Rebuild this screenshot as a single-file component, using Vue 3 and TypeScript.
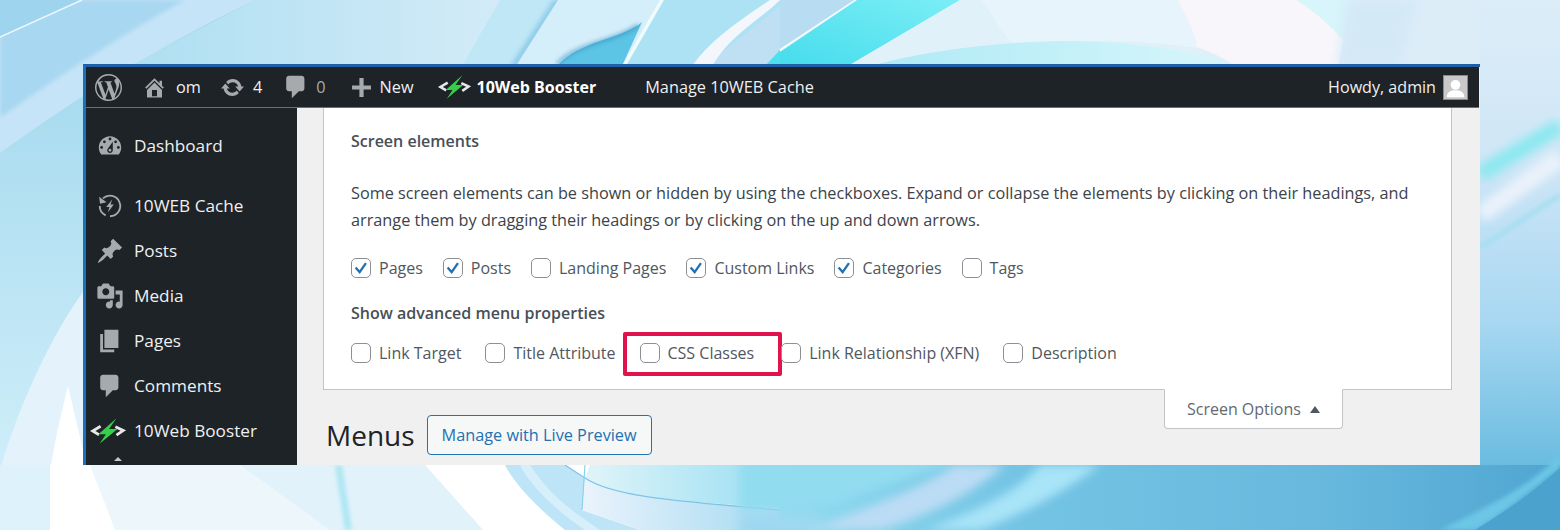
<template>
  <div class="page">
    <svg class="backdrop" viewBox="0 0 1560 530" preserveAspectRatio="none" aria-hidden="true">
      <defs>
        <linearGradient id="leftSide" x1="0" y1="0" x2="0" y2="1">
          <stop offset="0.2" stop-color="#a9dcef" />
          <stop offset="0.9" stop-color="#d0eefa" />
        </linearGradient>
        <linearGradient id="topBand" x1="0" y1="0" x2="1" y2="0">
          <stop offset="0" stop-color="#aedff1" />
          <stop offset="1" stop-color="#d4ebf8" />
        </linearGradient>
        <linearGradient id="rightSide" x1="0" y1="0" x2="0" y2="1">
          <stop offset="0" stop-color="#dcedf8" />
          <stop offset="0.3" stop-color="#cfe6f6" />
          <stop offset="0.6" stop-color="#a9d8f2" />
          <stop offset="0.87" stop-color="#6cbde0" />
          <stop offset="1" stop-color="#4fa6d1" />
        </linearGradient>
        <linearGradient id="lowerRight" x1="0" y1="0" x2="1" y2="0">
          <stop offset="0" stop-color="#92dcf0" />
          <stop offset="0.3" stop-color="#74c4e4" />
          <stop offset="0.7" stop-color="#68b8de" />
          <stop offset="1" stop-color="#4fa6d1" />
        </linearGradient>
        <linearGradient id="dome" x1="0" y1="0" x2="1" y2="0">
          <stop offset="0" stop-color="#aeeaf5" />
          <stop offset="1" stop-color="#d8f6fb" />
        </linearGradient>
        <linearGradient id="cyanBand" x1="0" y1="1" x2="1" y2="0">
          <stop offset="0" stop-color="#46dcec" />
          <stop offset="1" stop-color="#7beef6" />
        </linearGradient>
        <linearGradient id="swirlTop" x1="0" y1="0" x2="1" y2="0">
          <stop offset="0" stop-color="#e0f4f9" />
          <stop offset="1" stop-color="#92dcf0" />
        </linearGradient>
        <linearGradient id="swirlLow" x1="0" y1="0" x2="1" y2="0">
          <stop offset="0" stop-color="#eaf3fc" />
          <stop offset="1" stop-color="#9ed8f0" />
        </linearGradient>
        <filter id="soft" x="-20%" y="-20%" width="140%" height="140%"><feGaussianBlur stdDeviation="5" /></filter>
        <filter id="softer" x="-20%" y="-20%" width="140%" height="140%"><feGaussianBlur stdDeviation="2" /></filter>
      </defs>
      <rect width="1560" height="530" fill="#dff0f9" />

      <!-- left column -->
      <rect width="600" height="530" fill="url(#leftSide)" />
      <path d="M0 153C80 95 170 40 255 0H0Z" fill="#c6e4f7" />
      <path d="M0 118C60 75 130 30 185 0H0Z" fill="#a8d7f1" filter="url(#softer)" />
      <path d="M0 36 80 0H0Z" fill="#9fd4ee" />
      <path d="M0 37 82 0" stroke="#eaf7fc" stroke-width="1.500" />
      <path d="M0 470C20 400 55 330 83 292V470Z" fill="#e4f3fb" />
      <path d="M50 470C55 440 62 410 68 386L83 450V470Z" fill="#ffffff" />

      <!-- top strip -->
      <path d="M130 66 255 0H510V66Z" fill="url(#topBand)" />
      <path d="M462 66 500 0H556L512 66Z" fill="#bfe7f6" />
      <path d="M510 66 553 0H560L516 66Z" fill="#8ecbe8" filter="url(#softer)" opacity="0.9" />
      <path d="M516 66 558 0H662L624 66Z" fill="#d4eefa" />
      <path d="M557 66C580 40 620 40 642 22L622 66Z" fill="#5cc4e4" />
      <path d="M557 64C578 42 615 42 638 25" fill="none" stroke="#2b86ba" stroke-width="1.800" filter="url(#softer)" />
      <path d="M622 66 660 0H664L628 66Z" fill="#f0fbfe" />
      <path d="M626 66 664 0H780V66Z" fill="#ade2f4" />
      <path d="M705 66 780 6V66Z" fill="#bfe0f3" />
      <path d="M692 66C710 40 740 20 770 0H780C760 20 730 35 712 66Z" fill="#f3f7fc" />
      <path d="M765 66 780 50V66Z" fill="#4fe0ee" />

      <path d="M780 0H1560V66H780Z" fill="#dff0f9" />
      <path d="M780 0H856L780 50Z" fill="#b8dcf1" />
      <path d="M780 50 856 0" stroke="#f3fbfe" stroke-width="2" />
      <path d="M780 52 857 0H960L848 66H780Z" fill="url(#cyanBand)" />
      <path d="M848 66 960 0H982C1000 20 1005 40 1016 45 960 50 910 60 875 66Z" fill="#e0f1f9" />
      <path d="M980 0H1178C1190 20 1197 35 1197 48 1150 40 1060 38 1016 45 1000 35 995 15 980 0Z" fill="#e8f4fb" />
      <path d="M870 66C930 50 1000 41 1075 41 1130 42 1190 50 1240 66Z" fill="url(#dome)" />
      <path d="M1178 0H1297C1320 15 1335 30 1345 42L1340 66H1235C1220 55 1205 50 1197 47 1195 30 1185 15 1178 0Z" fill="#f8f6fb" />
      <path d="M1297 0H1352L1345 42C1335 30 1320 15 1297 0Z" fill="#d7f5fa" />
      <path d="M1352 0H1560V66H1338Z" fill="#dcedf8" />
      <path d="M1345 0H1420L1400 66H1336Z" fill="#d2e8f6" opacity="0.7" filter="url(#soft)" />

      <!-- right column -->
      <rect x="1480" width="80" height="530" fill="url(#rightSide)" />
      <path d="M1480 174 1560 126" stroke="#8ce8f0" stroke-width="16" filter="url(#soft)" />
      <path d="M1480 215 1560 158" stroke="#eaf2fb" stroke-width="18" filter="url(#soft)" />
      <path d="M1480 248 1560 195" stroke="#a4dff0" stroke-width="5" filter="url(#softer)" />

      <!-- bottom strip -->
      <rect y="465" width="1560" height="65" fill="#ffffff" />
      <rect y="465" width="50" height="65" fill="#def2fb" />
      <path d="M90 465H425L483 530H115Z" fill="#ecf6fb" />
      <path d="M240 465H425L483 530H330Z" fill="#e2f2fb" />
      <path d="M335 465H342L352 530H345Z" fill="#ace6f2" filter="url(#softer)" />
      <path d="M505 465H565L585 478 582 510 640 530H565C540 510 515 485 505 465Z" fill="#bde5f7" />
      <path d="M520 465H530C550 495 570 510 600 530H585C555 510 530 485 520 465Z" fill="#d6effa" />
      <path d="M590 465H800V510C660 500 610 495 585 478Z" fill="url(#swirlTop)" />
      <path d="M585 478C610 495 660 500 800 510V530H640L582 510Z" fill="url(#swirlLow)" />
      <path d="M565 465 585 478C610 495 660 500 780 510" stroke="#7cc3e8" stroke-width="1.200" fill="none" />
      <path d="M585 465 582 510" stroke="#8fd0ec" stroke-width="1.200" />
      <path d="M780 465H1560V530H780Z" fill="url(#lowerRight)" />
      <path d="M740 460H960L830 505 740 512Z" fill="#92dcf0" filter="url(#soft)" />
      <path d="M740 515H820V540H740Z" fill="#9ed8f0" filter="url(#soft)" />
      <path d="M810 530C860 510 920 490 955 465H1005C970 495 930 515 880 530Z" fill="#bcdcf5" filter="url(#soft)" />
      <path d="M925 530C980 510 1020 490 1040 465H1100C1060 495 1020 515 980 530Z" fill="#a9e4f8" filter="url(#soft)" />
      <path d="M1440 530C1490 505 1525 490 1560 455V468C1525 495 1500 515 1475 530Z" fill="#6cc6e6" filter="url(#softer)" />
      <path d="M1475 530C1500 515 1530 495 1560 468V530Z" fill="#4aa2cd" />
    </svg>

    <div class="window">
      <header class="admin-bar">
        <div class="bar-left">
          <svg class="wp-logo" viewBox="0 0 20 20"><path :d="icons.wordpress" /></svg>
          <span class="bar-item home">
            <svg class="bar-icon" viewBox="0 0 20 20"><path :d="icons.home" /></svg>om
          </span>
          <span class="bar-item updates">
            <svg class="bar-icon" viewBox="0 0 20 20"><path :d="icons.update" /></svg>4
          </span>
          <span class="bar-item comments">
            <svg class="bar-icon comment-icon" viewBox="0 0 20 20"><path :d="icons.comments" /></svg><span class="zero">0</span>
          </span>
          <span class="bar-item new">
            <svg class="bar-icon plus-icon" viewBox="0 0 20 20"><path d="M8 1h4v7h7v4h-7v7H8v-7H1V8h7z" /></svg>New
          </span>
          <span class="bar-item booster">
            <svg class="bolt-logo" viewBox="0 0 36 24">
              <path :d="boltChevrons" fill="none" stroke="#e8e8e8" stroke-width="2.600" />
              <path :d="boltShape" fill="#35d04a" />
            </svg>
            <b>10Web Booster</b>
          </span>
          <span class="bar-item cache">Manage 10WEB Cache</span>
        </div>
        <div class="bar-right">
          Howdy, admin
          <svg class="avatar" viewBox="0 0 26 26">
            <rect width="26" height="26" fill="#c9c9c9" />
            <circle cx="13" cy="10" r="5.500" fill="#fff" />
            <path d="M3 24c0-6 5-8 10-8s10 2 10 8z" fill="#fff" />
          </svg>
        </div>
      </header>

      <div class="body">
        <nav class="sidebar">
          <a v-for="item in menu" :key="item.label" class="menu-item" :class="item.cls">
            <svg v-if="item.icon" class="menu-icon" viewBox="0 0 20 20"><path :d="item.icon" /></svg>
            <svg v-else-if="item.cls === 'cache-item'" class="cache-icon" viewBox="0 0 24 24">
              <path d="M5.500 5A9.500 9.500 0 1 1 12 21.500" fill="none" stroke="#a7aaad" stroke-width="1.700" />
              <path d="M8 20.600A9.500 9.500 0 0 1 2.500 12" fill="none" stroke="#a7aaad" stroke-width="1.700" />
              <path d="M2 3.500l.8 6.500 6-1.500z" fill="#a7aaad" />
              <path d="M14 6 8.500 13h3l-1.500 5 5.500-7.500h-3z" fill="#a7aaad" />
            </svg>
            <svg v-else class="menu-bolt" viewBox="0 0 36 24">
              <path :d="boltChevrons" fill="none" stroke="#e8e8e8" stroke-width="2.600" />
              <path :d="boltShape" fill="#35d04a" />
            </svg>
            <span>{{ item.label }}</span>
          </a>
          <span class="menu-peek"></span>
        </nav>

        <main class="content">
          <section class="screen-panel">
            <h5 class="panel-title">Screen elements</h5>
            <p class="panel-text">
              Some screen elements can be shown or hidden by using the checkboxes. Expand or collapse the elements by clicking on their headings, and arrange them by dragging their headings or by clicking on the up and down arrows.
            </p>
            <div class="check-row first-row">
              <label v-for="box in elementBoxes" :key="box.label" class="check">
                <span class="box">
                  <svg v-if="box.checked" viewBox="0 0 20 20"><path d="M4 9.500 8.500 14.500 15.500 4.500" fill="none" stroke="#2271b1" stroke-width="2.600" /></svg>
                </span>
                {{ box.label }}
              </label>
            </div>
            <h5 class="panel-title advanced">Show advanced menu properties</h5>
            <div class="check-row second-row">
              <label v-for="label in advancedBoxes" :key="label" class="check" :class="{ marked: label === 'CSS Classes' }">
                <span class="box"></span>
                {{ label }}
                <span v-if="label === 'CSS Classes'" class="highlight"></span>
              </label>
            </div>
          </section>
          <div class="tab-row">
            <button class="screen-tab">Screen Options <i class="arrow"></i></button>
          </div>
          <div class="title-row">
            <h1>Menus</h1>
            <button class="live-btn">Manage with Live Preview</button>
          </div>
        </main>
      </div>
    </div>
  </div>
</template>

<script setup lang="ts">
const icons = {
  wordpress: 'M20 10c0-5.510-4.490-10-10-10C4.480 0 0 4.490 0 10c0 5.520 4.480 10 10 10 5.510 0 10-4.480 10-10zM7.780 15.370L4.370 6.220c.55-.02 1.170-.08 1.170-.08.5-.06.44-.78-.06-.75 0 0-1.450.11-2.370.11-.18 0-.37 0-.58-.01C4.120 2.690 6.870 1.110 10 1.110c2.330 0 4.450.87 6.050 2.340-.68-.11-1.650.39-1.650 1.580 0 .74.45 1.360.9 2.100.35.61.55 1.360.55 2.460 0 1.490-1.400 5-1.400 5l-3.030-8.370c.54-.02.82-.17.82-.17.5-.05.44-.8-.06-.77 0 0-1.440.12-2.380.12-.87 0-2.330-.12-2.330-.12-.5-.03-.56.75-.06.77l.92.08 1.260 3.410zM17.410 10c.24-.64.74-1.870.43-4.250.7 1.290 1.050 2.710 1.050 4.250 0 3.290-1.730 6.240-4.470 7.780.99-2.670 1.990-5.360 2.990-7.780zM6.100 18.090C3.120 16.650 1.110 13.530 1.110 10c0-1.300.23-2.480.72-3.590C3.250 10.300 4.670 14.200 6.100 18.090zm4.030-6.630l2.580 6.980c-.86.290-1.760.45-2.710.45-.79 0-1.570-.11-2.290-.33.81-2.380 1.620-4.740 2.420-7.100z',
  home: 'M16 8.500l1.530 1.530-1.060 1.060L10 4.620l-6.470 6.470-1.060-1.060L10 2.500l4 4v-2h2v4zm-6-2.460l6 5.990V18H4v-5.970zM12 17v-5H8v5h4z',
  update: 'M10.200 3.280c3.530 0 6.430 2.610 6.920 6h2.080l-3.500 4-3.500-4h2.320c-.45-1.970-2.210-3.440-4.320-3.440-1.450 0-2.730.71-3.540 1.780L4.950 5.660C6.230 4.200 8.110 3.280 10.200 3.280zm-.4 13.440c-3.520 0-6.430-2.610-6.920-6H.800l3.500-4c1.170 1.330 2.330 2.670 3.500 4H5.480c.45 1.970 2.210 3.440 4.320 3.440 1.450 0 2.730-.71 3.540-1.780l1.710 1.950c-1.280 1.460-3.150 2.390-5.250 2.390z',
  comments: 'M5 2h9c1.100 0 2 .9 2 2v7c0 1.100-.9 2-2 2h-2l-5 5v-5H5c-1.100 0-2-.9-2-2V4c0-1.100.9-2 2-2z',
  dashboard: 'M3.760 16h12.480c1.100-1.370 1.760-3.110 1.760-5 0-4.420-3.580-8-8-8s-8 3.580-8 8c0 1.890.66 3.630 1.760 5zM10 4c.55 0 1 .45 1 1s-.45 1-1 1-1-.45-1-1 .45-1 1-1zM6 6c.55 0 1 .45 1 1s-.45 1-1 1-1-.45-1-1 .45-1 1-1zm8 0c.55 0 1 .45 1 1s-.45 1-1 1-1-.45-1-1 .45-1 1-1zm-5.370 5.550L12 7v6c0 1.100-.9 2-2 2s-2-.9-2-2c0-.57.24-1.080.63-1.450zM4 10c.55 0 1 .45 1 1s-.45 1-1 1-1-.45-1-1 .45-1 1-1zm12 0c.55 0 1 .45 1 1s-.45 1-1 1-1-.45-1-1 .45-1 1-1zm-5 3c0-.55-.45-1-1-1s-1 .45-1 1 .45 1 1 1 1-.45 1-1z',
  post: 'M10.440 3.020l1.820-1.820 6.360 6.350-1.830 1.820c-1.050-.68-2.480-.57-3.410.36l-.75.75c-.92.93-1.040 2.350-.35 3.410l-1.830 1.820-2.410-2.410-2.800 2.790c-.42.42-3.380 2.710-3.800 2.290s1.860-3.390 2.280-3.810l2.790-2.790L4.100 9.360l1.830-1.820c1.050.69 2.480.57 3.400-.36l.75-.75c.93-.92 1.050-2.350.36-3.410z',
  media: 'M13 11V4c0-.55-.45-1-1-1h-1.670L9 1H5L3.670 3H2c-.55 0-1 .45-1 1v7c0 .55.45 1 1 1h10c.55 0 1-.45 1-1zM7 4.500c1.380 0 2.500 1.120 2.500 2.500S8.380 9.500 7 9.500 4.500 8.380 4.500 7 5.620 4.500 7 4.500zM14 6h5v10.500c0 1.380-1.120 2.500-2.500 2.500S14 17.880 14 16.500s1.120-2.500 2.500-2.500c.17 0 .34.020.5.050V9h-3V6zm-4 8.050V13h2v3.500c0 1.380-1.120 2.500-2.500 2.500S7 17.880 7 16.500 8.120 14 9.500 14c.17 0 .34.020.5.050z',
  page: 'M6 15V2h10v13H6zm-1 1h8v2H3V5h2v11z'
}

// shared by the admin bar and the sidebar
const boltChevrons = 'M11 7.500 3.500 12l6 3.500M25 8l7.500 3.500L26 16'
const boltShape = 'M26 0 9 15h7l-6 9 17-14h-8z'

interface MenuEntry {
  label: string
  icon?: string
  cls?: string
}

const menu: MenuEntry[] = [
  { label: 'Dashboard', icon: icons.dashboard, cls: 'dash-item' },
  { label: '10WEB Cache', cls: 'cache-item' },
  { label: 'Posts', icon: icons.post },
  { label: 'Media', icon: icons.media },
  { label: 'Pages', icon: icons.page },
  { label: 'Comments', icon: icons.comments },
  { label: '10Web Booster', cls: 'booster-item' }
]

const elementBoxes = [
  { label: 'Pages', checked: true },
  { label: 'Posts', checked: true },
  { label: 'Landing Pages', checked: false },
  { label: 'Custom Links', checked: true },
  { label: 'Categories', checked: true },
  { label: 'Tags', checked: false }
]

const advancedBoxes = ['Link Target', 'Title Attribute', 'CSS Classes', 'Link Relationship (XFN)', 'Description']
</script>

<style>
html,
body {
  margin: 0;
  background: #d8edf8;
}
</style>

<style scoped>
.page {
  position: relative;
  width: 1560px;
  height: 530px;
  overflow: hidden;
  padding: 64px 0 0 83px;
  box-sizing: border-box;
  font-family: "Open Sans", "Noto Sans", sans-serif;
  font-size: 16px;
  color: #3c434a;
}

.backdrop {
  position: absolute;
  inset: 0;
  width: 100%;
  height: 100%;
}

.window {
  position: relative;
  width: 1397px;
  height: 401px;
  display: flex;
  flex-direction: column;
  background: #f0f0f1;
  border-top: 3px solid #1f5fa8;
  border-left: 3px solid #1770c0;
  box-sizing: border-box;
  overflow: hidden;
}

.admin-bar {
  flex: 0 0 41px;
  display: flex;
  justify-content: space-between;
  align-items: center;
  background: #1d2327;
  color: #f0f0f1;
  padding: 0 11px 0 9px;
  margin-right: 1px;
  border-bottom: 1px solid #6b6f73;
  box-sizing: border-box;
}

.bar-left {
  display: flex;
  align-items: center;
}

.wp-logo {
  width: 27px;
  height: 27px;
  fill: #a7aaad;
  margin-right: 20px;
}

.bar-item {
  display: flex;
  align-items: center;
  font-size: 16.300px;
  white-space: nowrap;
}

.bar-icon {
  width: 25px;
  height: 25px;
  fill: #a7aaad;
  margin-right: 8px;
}

.home .bar-icon {
  margin-right: 9px;
}

.comment-icon {
  width: 28px;
  height: 28px;
  margin-right: 6px;
}

.plus-icon {
  width: 21px;
  height: 21px;
  margin-right: 8px;
}

.home {
  margin-right: 19px;
}

.updates {
  margin-right: 20px;
}

.comments {
  margin-right: 25px;
}

.zero {
  color: #a7aaad;
}

.new {
  margin-right: 23px;
}

.bolt-logo {
  width: 35px;
  height: 24px;
  margin-right: 5px;
}

.booster b {
  font-size: 16px;
  font-weight: 700;
  color: #fff;
}

.booster {
  margin-right: 49px;
}

.bar-right {
  display: flex;
  align-items: center;
  gap: 7px;
  font-size: 16.100px;
}

.avatar {
  width: 25px;
  height: 25px;
  border: 1px solid #8a8a8a;
  box-sizing: border-box;
}

.body {
  flex: 1;
  display: flex;
  min-height: 0;
}

.sidebar {
  flex: 0 0 211px;
  background: #1d2327;
  color: #f0f0f1;
  padding-top: 23px;
  display: flex;
  flex-direction: column;
  box-sizing: border-box;
  overflow: hidden;
}

.menu-item {
  flex: 0 0 45px;
  display: flex;
  align-items: center;
  gap: 10px;
  padding-left: 10px;
  font-size: 17.200px;
  white-space: nowrap;
  box-sizing: border-box;
}

.dash-item {
  flex-basis: 29px;
  margin-bottom: 23px;
}

.menu-icon {
  width: 28px;
  height: 28px;
  fill: #a7aaad;
  flex: none;
}

.cache-icon {
  width: 26px;
  height: 26px;
  margin: 0 1px;
  flex: none;
}

.menu-bolt {
  width: 38px;
  height: 26px;
  margin-left: -7px;
  margin-right: -3px;
  flex: none;
}

.menu-peek {
  display: block;
  width: 0;
  height: 0;
  margin: 0 0 0 28px;
  border: 4px solid transparent;
  border-bottom-color: #c7c8ca;
}

.content {
  flex: 1;
  display: flex;
  flex-direction: column;
  min-width: 0;
  padding: 0 28px 0 26px;
}

.screen-panel {
  background: #fff;
  border: 1px solid #c3c4c7;
  border-top: none;
  height: 282px;
  padding: 21px 27px 0;
  box-sizing: border-box;
  flex: none;
}

.panel-title {
  margin: 0;
  font-size: 16px;
  font-weight: 600;
  line-height: 24px;
  color: #484f56;
}

.panel-text {
  margin: 27px 0 0;
  font-size: 16.250px;
  line-height: 27px;
  color: #3c434a;
}

.check-row {
  display: flex;
  font-size: 16px;
  color: #50575e;
}

.first-row {
  margin-top: 22px;
  gap: 20px;
}

.advanced {
  margin-top: 21px;
}

.second-row {
  margin-top: 16px;
  gap: 24px;
}

.check {
  position: relative;
  display: flex;
  align-items: center;
  gap: 8px;
  height: 24px;
  white-space: nowrap;
}

.marked {
  margin-right: 3px;
}

.box {
  width: 20px;
  height: 20px;
  flex: none;
  border: 1.500px solid #8c8f94;
  border-radius: 5px;
  background: #fff;
  box-sizing: border-box;
  display: block;
}

.box svg {
  display: block;
  width: 100%;
  height: 100%;
}

.highlight {
  position: absolute;
  left: -17px;
  right: -28px;
  top: -9px;
  bottom: -11px;
  border: 4px solid #e0144c;
  border-radius: 2px;
  pointer-events: none;
}

.tab-row {
  display: flex;
  justify-content: flex-end;
  padding-right: 109px;
  flex: none;
}

.screen-tab {
  width: 179px;
  height: 40px;
  margin-top: -1px;
  background: #fff;
  border: 1px solid #c3c4c7;
  border-top: 1px solid #fff;
  border-radius: 0 0 4px 4px;
  font: inherit;
  font-size: 16px;
  color: #646970;
  padding: 0;
}

.arrow {
  display: inline-block;
  width: 0;
  height: 0;
  margin-left: 5px;
  border: 5.500px solid transparent;
  border-top: none;
  border-bottom: 7px solid #50575e;
  vertical-align: 2px;
}

.title-row {
  display: flex;
  align-items: center;
  gap: 12px;
  margin: -14px 0 0 3px;
}

.title-row h1 {
  margin: 0;
  font-size: 28px;
  font-weight: 400;
  line-height: 40px;
  color: #1d2327;
}

.live-btn {
  width: 225px;
  height: 40px;
  background: #f6f7f7;
  border: 1.500px solid #2271b1;
  border-radius: 4px;
  color: #2271b1;
  font: inherit;
  font-size: 16.250px;
  padding: 0;
}
</style>
